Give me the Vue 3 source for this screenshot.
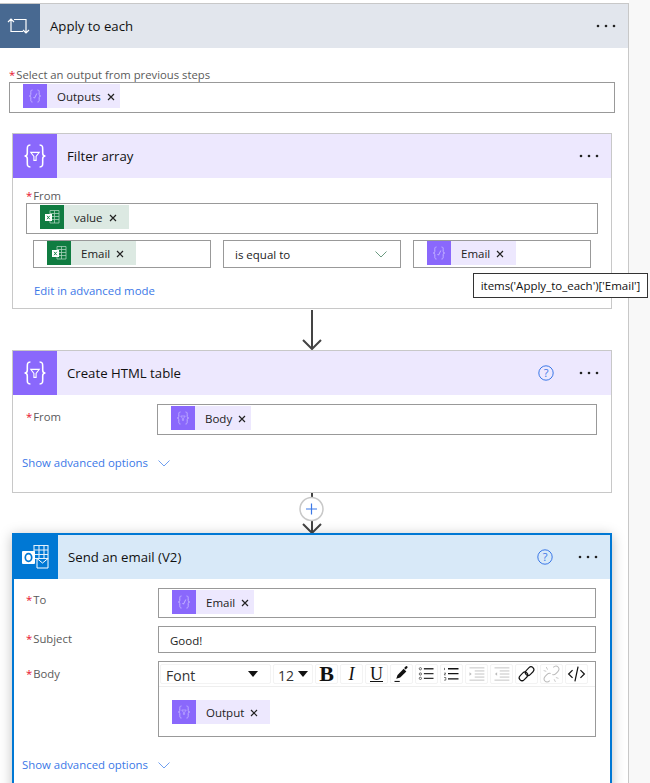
<script setup>
const tools = ['i-pen', 'i-ul', 'i-ol', 'i-indent', 'i-outdent', 'i-link', 'i-unlink', 'i-code']
</script>

<template>
  <div class="page">
    <svg class="defs" aria-hidden="true">
      <symbol id="i-expr" viewBox="0 0 24 24">
        <g fill="none" stroke="currentColor" stroke-width=".9">
          <path d="M9.500 6C7.800 6 7.800 7 7.800 8.500v2c0 1-.6 1.500-1.500 1.500.9 0 1.500.5 1.500 1.500v2c0 1.500 0 2.500 1.700 2.500" />
          <path d="M14.500 6c1.700 0 1.700 1 1.700 2.500v2c0 1 .6 1.500 1.500 1.500-.9 0-1.500.5-1.500 1.500v2c0 1.500 0 2.500-1.700 2.500" />
          <path d="M10.500 13l1 1.200L13.800 9.500" />
        </g>
      </symbol>
      <symbol id="i-filter" viewBox="0 0 24 24">
        <g fill="none" stroke="currentColor" stroke-width=".85">
          <path d="M9.500 6C7.800 6 7.800 7 7.800 8.500v2c0 1-.6 1.500-1.500 1.500.9 0 1.500.5 1.500 1.500v2c0 1.500 0 2.500 1.700 2.500" />
          <path d="M14.500 6c1.700 0 1.700 1 1.700 2.500v2c0 1 .6 1.500 1.500 1.500-.9 0-1.500.5-1.500 1.500v2c0 1.500 0 2.500-1.700 2.500" />
          <path d="M9.700 10h4.600l-1.700 2.200v2.200h-1.200v-2.200z" stroke-width=".6" />
        </g>
      </symbol>
      <symbol id="i-excel" viewBox="0 0 24 24">
        <path d="M10 5.500h9v12.500h-9zM10 8.500h9M10 11.500h9M10 14.500h9M14.500 5.500v12.500" fill="none" stroke="#a9d0ba" stroke-width=".8" />
        <rect x="5" y="9" width="7" height="7" fill="#fff" />
        <path d="M7 10.800l2.800 3.400M9.800 10.800l-2.800 3.400" stroke="#107c41" stroke-width=".9" />
      </symbol>
      <symbol id="i-x" viewBox="0 0 8 8">
        <path d="M1 1l6 6M7 1L1 7" fill="none" stroke="#222" stroke-width="1.200" />
      </symbol>
      <symbol id="i-pen" viewBox="0 0 24 24">
        <path d="M6 17.500l1.500-4.500 7-7 3 3-7 7z" fill="#111" />
        <path d="M15 5l2-2c1-.6 2.400.8 1.800 1.800l-2 2z" fill="#111" />
        <path d="M4 20.500h6" stroke="#111" stroke-width="1.200" />
      </symbol>
      <symbol id="i-ul" viewBox="0 0 24 24">
        <g fill="none" stroke="#555">
          <circle cx="5" cy="6" r="1.300" />
          <circle cx="5" cy="12" r="1.300" />
          <circle cx="5" cy="17" r="1.300" />
        </g>
        <path d="M9 6h11M9 11.500h11M9 17h11" stroke="#333" stroke-width="1.500" />
      </symbol>
      <symbol id="i-ol" viewBox="0 0 24 24">
        <path d="M4 5v2.500M3.500 11h2l-2 2h2M3.500 16h2v3h-2" fill="none" stroke="#444" stroke-width=".8" />
        <path d="M8 6h12M8 11.500h12M8 17.500h12" stroke="#111" stroke-width="1.500" />
      </symbol>
      <symbol id="i-indent" viewBox="0 0 24 24">
        <path d="M4 5h17M10 8.500h11M10 12h11M10 15.500h11M4 19h17" stroke="#bbb" stroke-width="1" />
        <path d="M4 10l2.500 2L4 14z" fill="#bbb" />
      </symbol>
      <symbol id="i-outdent" viewBox="0 0 24 24">
        <path d="M4 5h17M10 8.500h11M10 12h11M10 15.500h11M4 19h17" stroke="#bbb" stroke-width="1" />
        <path d="M7 10l-2.500 2L7 14z" fill="#bbb" />
      </symbol>
      <symbol id="i-link" viewBox="0 0 24 24">
        <g fill="none" stroke="#111" stroke-width="1.300">
          <rect x="3" y="11.500" width="11" height="6.500" rx="3.200" transform="rotate(-45 8.500 14.700)" />
          <rect x="10" y="5.500" width="11" height="6.500" rx="3.200" transform="rotate(-45 15.500 8.700)" />
        </g>
      </symbol>
      <symbol id="i-unlink" viewBox="0 0 24 24">
        <g fill="none" stroke="#bbb" stroke-width="1.200">
          <path d="M10 19.500c-2 2-4 2-5.500.5s-1.500-3.500.5-5.500l2-2c1.500-1.500 3-1.500 4-1" />
          <path d="M14 4.500c2-2 4-2 5.500-.5s1.500 3.500-.5 5.500l-2 2c-1.500 1.500-3 1.500-4 1" />
          <path d="M6 4l1.500 3M3 8l3 1M17 16l3 1M15 18l1.500 3" stroke-width=".9" />
        </g>
      </symbol>
      <symbol id="i-code" viewBox="0 0 24 24">
        <path d="M7.500 7.500L3 12l4.500 4.500M16.500 7.500L21 12l-4.500 4.500M13.800 3.500l-3.600 17" fill="none" stroke="#111" stroke-width="1.400" />
      </symbol>
    </svg>

    <div class="canvas">
      <div class="loop">
        <header class="head head-loop">
          <span class="head-icon icon-loop">
            <svg width="40" height="44" viewBox="0 0 40 44" fill="none" stroke="#fff" stroke-width="1.200">
              <path d="M11 15.500v12h12M8 18l3-3 3 3M14 15.500h12v13M23 26l3 3 3-3" />
            </svg>
          </span>
          <span class="title">Apply to each</span>
          <svg class="dots" width="20" height="4"><circle cx="2" cy="2" r="1.300" /><circle cx="10" cy="2" r="1.300" /><circle cx="18" cy="2" r="1.300" /></svg>
        </header>

        <div class="loop-body">
          <div class="field-label"><i>*</i>Select an output from previous steps</div>
          <div class="input tall">
            <span class="token">
              <svg class="token-icon"><use href="#i-expr" /></svg>
              <span class="token-text">Outputs</span>
              <svg class="x"><use href="#i-x" /></svg>
            </span>
          </div>

          <section class="card filter">
            <header class="head head-purple">
              <svg class="head-icon icon-purple"><use href="#i-filter" /></svg>
              <span class="title">Filter array</span>
              <svg class="dots" width="20" height="4"><circle cx="2" cy="2" r="1.300" /><circle cx="10" cy="2" r="1.300" /><circle cx="18" cy="2" r="1.300" /></svg>
            </header>
            <div class="filter-body">
              <div class="field-label"><i>*</i>From</div>
              <div class="input tall">
                <span class="token green wide">
                  <svg class="token-icon"><use href="#i-excel" /></svg>
                  <span class="token-text">value</span>
                  <svg class="x"><use href="#i-x" /></svg>
                </span>
              </div>
              <div class="condition">
                <div class="input cond">
                  <span class="token green wide">
                    <svg class="token-icon"><use href="#i-excel" /></svg>
                    <span class="token-text">Email</span>
                    <svg class="x"><use href="#i-x" /></svg>
                  </span>
                </div>
                <div class="input cond select">
                  <span>is equal to</span>
                  <svg width="12" height="7" viewBox="0 0 12 7" fill="none" stroke="#6a9a80"><path d="M.5.5L6 6l5.500-5.500" /></svg>
                </div>
                <div class="input cond">
                  <span class="token wide">
                    <svg class="token-icon"><use href="#i-expr" /></svg>
                    <span class="token-text">Email</span>
                    <svg class="x"><use href="#i-x" /></svg>
                  </span>
                </div>
              </div>
              <a class="link edit">Edit in advanced mode</a>
            </div>
            <div class="tooltip">items('Apply_to_each')['Email']</div>
          </section>

          <div class="connector">
            <svg width="24" height="41" viewBox="0 0 24 41" fill="none" stroke="#444" stroke-width="2">
              <path d="M12 1v38M3 31l9 9 9-9" />
            </svg>
          </div>

          <section class="card">
            <header class="head head-purple">
              <svg class="head-icon icon-purple"><use href="#i-filter" /></svg>
              <span class="title">Create HTML table</span>
              <svg class="help" width="16" height="16" viewBox="0 0 16 16"><circle cx="8" cy="8" r="7.200" fill="none" stroke="#3b78e7" /><text x="8" y="11.800" text-anchor="middle">?</text></svg>
              <svg class="dots" width="20" height="4"><circle cx="2" cy="2" r="1.300" /><circle cx="10" cy="2" r="1.300" /><circle cx="18" cy="2" r="1.300" /></svg>
            </header>
            <div class="form table-form">
              <div class="row-label"><i>*</i>From</div>
              <div class="input tall">
                <span class="token">
                  <svg class="token-icon"><use href="#i-filter" /></svg>
                  <span class="token-text">Body</span>
                  <svg class="x"><use href="#i-x" /></svg>
                </span>
              </div>
            </div>
            <a class="link more more-table">Show advanced options
              <svg width="12" height="7" viewBox="0 0 12 7" fill="none" stroke="#6f9ff0"><path d="M.5.5L6 6l5.500-5.500" /></svg>
            </a>
          </section>

          <div class="connector add">
            <svg width="28" height="40" viewBox="0 0 28 40" fill="none">
              <path d="M14 0v6M14 28v11" stroke="#444" stroke-width="2" />
              <path d="M5 31l9 9 9-9" stroke="#444" stroke-width="2" />
              <circle cx="13.500" cy="16" r="11.500" fill="#fff" stroke="#c8c8c8" stroke-width="1.500" />
              <path d="M13.500 10.500v11M8 16h11" stroke="#3b78e7" stroke-width="1.200" />
            </svg>
          </div>

          <section class="card mail">
            <header class="head head-blue">
              <span class="head-icon icon-blue">
                <svg width="44" height="44" viewBox="0 0 44 44">
                  <path d="M20 10.500h14v13h-14zM20 15h14M20 19.500h14M25 10.500v13M30 10.500v13" fill="none" stroke="#e4f0fb" stroke-width="1.100" />
                  <path d="M23 23.500l5.500 4.500 5.500-4.500v9.500h-11z" fill="#0078d4" stroke="#fff" stroke-width="1" />
                  <rect x="8" y="16" width="13" height="13" rx="1" fill="#fff" />
                  <ellipse cx="14.500" cy="22.500" rx="3.200" ry="3.800" fill="none" stroke="#0078d4" stroke-width="1.700" />
                </svg>
              </span>
              <span class="title">Send an email (V2)</span>
              <svg class="help" width="16" height="16" viewBox="0 0 16 16"><circle cx="8" cy="8" r="7.200" fill="none" stroke="#3b78e7" /><text x="8" y="11.800" text-anchor="middle">?</text></svg>
              <svg class="dots" width="20" height="4"><circle cx="2" cy="2" r="1.300" /><circle cx="10" cy="2" r="1.300" /><circle cx="18" cy="2" r="1.300" /></svg>
            </header>
            <div class="form mail-form">
              <div class="row-label row-to"><i>*</i>To</div>
              <div class="input to">
                <span class="token">
                  <svg class="token-icon"><use href="#i-expr" /></svg>
                  <span class="token-text">Email</span>
                  <svg class="x"><use href="#i-x" /></svg>
                </span>
              </div>
              <div class="row-label"><i>*</i>Subject</div>
              <div class="input subject">Good!</div>
              <div class="row-label"><i>*</i>Body</div>
              <div class="editor">
                <div class="toolbar">
                  <span class="tool font-pick"><span class="pick-text">Font</span><b class="caret"></b></span>
                  <span class="tool size-pick"><span class="pick-text">12</span><b class="caret"></b></span>
                  <span class="tool glyph bold">B</span>
                  <span class="tool glyph italic">I</span>
                  <span class="tool glyph under">U</span>
                  <span v-for="name in tools" :key="name" class="tool">
                    <svg width="22" height="22"><use :href="'#' + name" /></svg>
                  </span>
                </div>
                <div class="editor-text">
                  <span class="token wide">
                    <svg class="token-icon"><use href="#i-filter" /></svg>
                    <span class="token-text">Output</span>
                    <svg class="x"><use href="#i-x" /></svg>
                  </span>
                </div>
              </div>
            </div>
            <a class="link more more-mail">Show advanced options
              <svg width="12" height="7" viewBox="0 0 12 7" fill="none" stroke="#6f9ff0"><path d="M.5.5L6 6l5.500-5.500" /></svg>
            </a>
          </section>
        </div>
      </div>
    </div>
  </div>
</template>

<style scoped>
.page {
  height: 783px;
  overflow: hidden;
  background: #f8f8f8;
  font-family: "Open Sans", "Noto Sans", sans-serif;
  font-size: 11.500px;
  color: #222;
}
.defs {
  position: absolute;
  width: 0;
  height: 0;
}
.canvas {
  width: 629px;
  padding-top: 3px;
  background: #fff;
}
.loop {
  border-top: 1px solid #c8c8c8;
  border-right: 1px solid #c8c8c8;
  background: #fff;
}
.head {
  display: flex;
  align-items: center;
  height: 44px;
}
.head-loop { background: #e2e6ed; }
.head-purple { background: #ede8fe; }
.head-blue { background: #d8e9f8; }
.head-icon {
  display: block;
  flex: none;
  width: 44px;
  height: 44px;
}
.icon-loop {
  width: 40px;
  background: #486991;
}
.icon-purple {
  background: #8a68fc;
  color: #fff;
}
.icon-blue { background: #0078d4; }
.title {
  flex: 1;
  margin-left: 10px;
  font-size: 13.200px;
  color: #111;
}
.help {
  margin-right: 25px;
}
.help text {
  font-size: 11px;
  fill: #3b78e7;
}
.dots {
  flex: none;
  margin-right: 12px;
  fill: #222;
}
.loop-body {
  padding: 20px 13px 0 9px;
}
.field-label, .row-label {
  height: 14px;
  line-height: 14px;
  font-size: 11.300px;
  color: #5a5a5a;
}
.field-label i, .row-label i {
  margin-right: 1px;
  color: #e8112d;
  font-style: normal;
}
.input {
  box-sizing: border-box;
  border: 1px solid #999;
  background: #fff;
}
.tall {
  height: 31px;
  padding: 1px 13px;
}
.token {
  display: inline-flex;
  align-items: center;
  height: 24px;
  padding-right: 5px;
  background: #ede8fe;
  vertical-align: top;
}
.wide { padding-right: 12px; }
.token-icon {
  flex: none;
  width: 24px;
  height: 24px;
  background: #8a68fc;
  color: #c9bbff;
}
.token-text {
  margin-left: 10px;
  color: #222;
}
.x {
  flex: none;
  width: 8px;
  height: 8px;
  margin: 2px 0 0 6px;
}
.green { background: #dce9e2; }
.green .token-icon { background: #107c41; }
.card {
  position: relative;
  box-sizing: border-box;
  width: 600px;
  margin-left: 3px;
  border: 1px solid #c8c8c8;
  background: #fff;
}
.filter {
  height: 176px;
  margin-top: 20px;
}
.filter-body {
  padding: 11px 13px 10px;
}
.condition {
  display: grid;
  grid-template-columns: repeat(3, 178px);
  gap: 12px;
  margin: 6px 7px 0;
}
.cond {
  height: 28px;
  padding: 0 13px;
}
.select {
  display: flex;
  align-items: center;
  justify-content: space-between;
  padding: 0 13px 0 11px;
}
.link {
  color: #3b78e7;
  line-height: 16px;
  font-size: 11.400px;
}
.edit {
  display: block;
  margin: 15px 0 0 8px;
}
.tooltip {
  position: absolute;
  top: 139px;
  left: 460px;
  z-index: 2;
  box-sizing: border-box;
  width: 175px;
  height: 25px;
  border: 1px solid #333;
  background: #fff;
  line-height: 23px;
  text-align: center;
  white-space: nowrap;
  font-size: 11.500px;
  color: #111;
}
.connector {
  display: flex;
  justify-content: center;
  width: 606px;
  height: 41px;
}
.connector.add {
  height: 40px;
}
.form {
  display: grid;
  gap: 8px 0;
  padding: 9px 14px 0 13px;
}
.table-form {
  grid-template-columns: 131px 1fr;
}
.row-label {
  padding-top: 6px;
}
.row-to {
  padding-top: 5px;
}
.more {
  display: flex;
  align-items: center;
  gap: 10px;
  margin-top: 20px;
}
.more-table {
  padding: 0 0 21px 9px;
}
.mail {
  border: 2px solid #0078d4;
  box-shadow: 0 2px 12px rgba(0, 0, 0, 0.25);
  height: 320px;
}
.mail-form {
  grid-template-columns: 132px 1fr;
  padding-left: 12px;
}
.more-mail {
  padding-left: 8px;
}
.to {
  height: 30px;
  padding: 1px 13px;
}
.subject {
  height: 27px;
  padding-left: 11px;
  line-height: 27px;
}
.editor {
  box-sizing: border-box;
  height: 76px;
  border: 1px solid #999;
}
.toolbar {
  display: flex;
  gap: 2px;
  height: 25px;
  padding: 2px 1px 0;
  box-sizing: border-box;
  border-bottom: 1px solid #eee;
}
.tool {
  display: flex;
  align-items: center;
  justify-content: center;
  box-sizing: border-box;
  width: 23px;
  height: 20px;
  border: 1px solid #f3f3f3;
  border-radius: 2px;
  color: #111;
}
.font-pick, .size-pick {
  justify-content: space-between;
  font-size: 14px;
  color: #333;
}
.pick-text {
  padding-top: 2px;
}
.font-pick {
  width: 111px;
  padding: 0 12px 0 5px;
}
.size-pick {
  width: 40px;
  padding: 0 4px;
}
.caret {
  width: 0;
  height: 0;
  border-left: 5px solid transparent;
  border-right: 5px solid transparent;
  border-top: 6px solid #111;
}
.glyph {
  font-family: "Liberation Serif", serif;
  font-size: 18px;
}
.bold {
  font-size: 22px;
  font-weight: 700;
}
.italic { font-style: italic; }
.under { text-decoration: underline; text-underline-offset: 1px; }
.editor-text {
  padding: 13px 13px 0;
}
</style>
